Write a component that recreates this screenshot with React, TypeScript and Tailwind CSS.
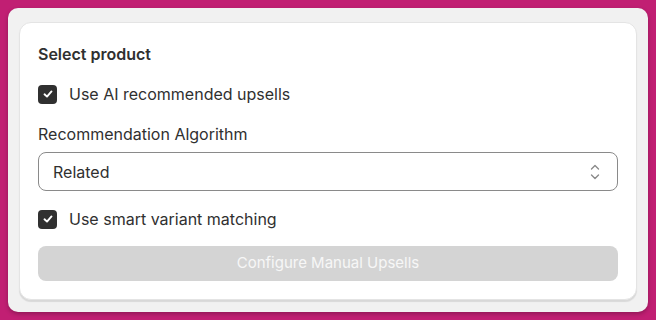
import React from "react";

function Check() {
  return (
    <span className="flex h-[19px] w-[19px] items-center justify-center rounded-[4px] bg-[#303030]">
      <svg width="12" height="12" viewBox="0 0 12 12" fill="none">
        <path d="M2.5 6.3 L5 8.6 L9.5 3.4" stroke="white" strokeWidth="1.9" strokeLinecap="round" strokeLinejoin="round" />
      </svg>
    </span>
  );
}

function Chevrons() {
  return (
    <svg width="12" height="20" viewBox="0 0 12 20" fill="none">
      <path d="M2.5 7 L6 3.5 L9.5 7" stroke="#8a8a8a" strokeWidth="1.4" strokeLinecap="round" strokeLinejoin="round" />
      <path d="M2.5 13 L6 16.5 L9.5 13" stroke="#8a8a8a" strokeWidth="1.4" strokeLinecap="round" strokeLinejoin="round" />
    </svg>
  );
}

export default function App() {
  return (
    <div
      className="h-[320px] w-[656px] bg-[#c11f73] pl-[8px] pr-[8px] pt-[8px] text-[#303030]"
      style={{ fontFamily: "Inter, 'Noto Sans', sans-serif" }}
    >
      <div className="h-[304px] w-[640px] rounded-[10px] bg-[#f1f1f1] pl-[11px] pt-[14px] shadow-[0_2px_4px_rgba(0,0,0,0.25)]">
        <div className="h-[278px] w-[618px] rounded-[12px] border border-[#e4e4e4] bg-white px-[18px] pt-[19px] shadow-[0_2px_1px_rgba(0,0,0,0.10)]">
          <div className="h-[24px] text-[16px] font-semibold leading-[24px]">Select product</div>
          <div className="mt-[16px] flex h-[24px] items-center gap-[12px]">
            <Check />
            <span className="text-[16px] leading-[24px]">Use AI recommended upsells</span>
          </div>
          <div className="mt-[16px] h-[24px] text-[16px] leading-[24px]">Recommendation Algorithm</div>
          <div className="mt-[6px] flex h-[39px] items-center justify-between rounded-[8px] border border-[#8a8a8a] pl-[14px] pr-[16px]">
            <span className="text-[16px] leading-[24px]">Related</span>
            <Chevrons />
          </div>
          <div className="mt-[16px] flex h-[24px] items-center gap-[12px]">
            <Check />
            <span className="text-[16px] leading-[24px]">Use smart variant matching</span>
          </div>
          <div className="mt-[15px] flex h-[35px] items-center justify-center rounded-[8px] bg-[#d4d4d4] text-[15px] text-[#f7f7f7]">
            Configure Manual Upsells
          </div>
        </div>
      </div>
    </div>
  );
}
